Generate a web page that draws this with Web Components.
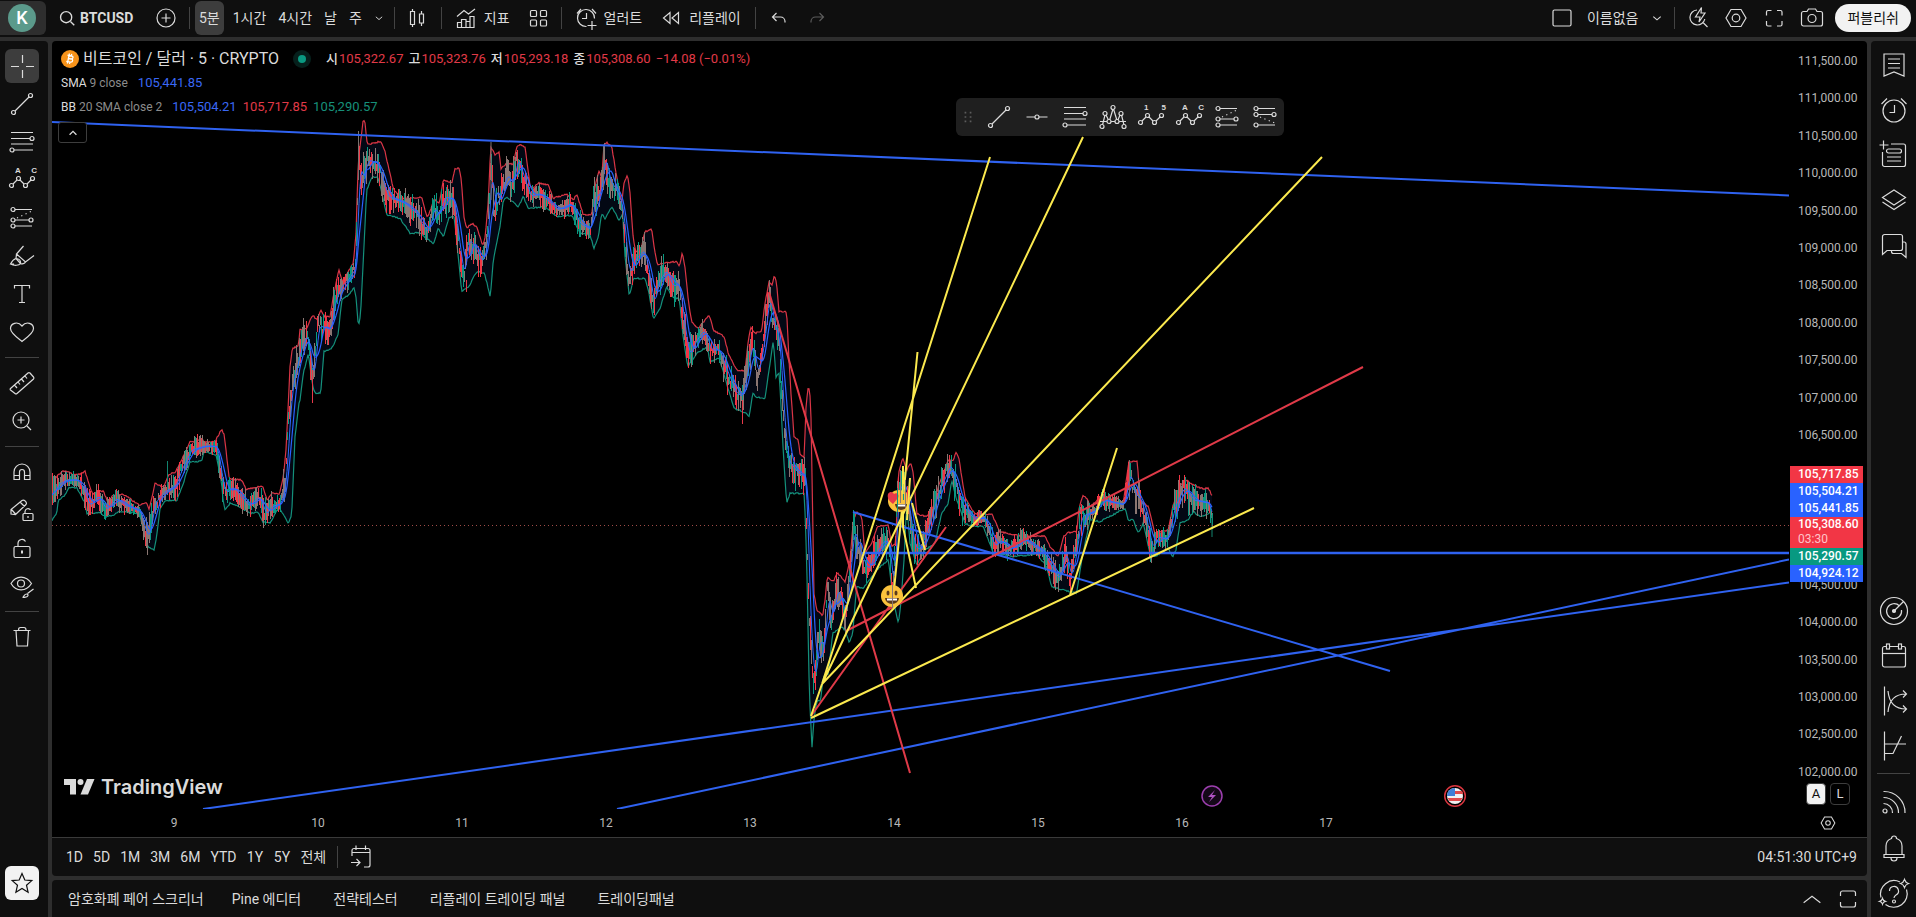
<!DOCTYPE html>
<html lang="ko">
<head>
<meta charset="utf-8">
<title>BTCUSD – TradingView</title>
<style>
  body { margin: 0; background: #2e2e2e; color: #dbdbdb; font: 14px/20px Roboto, "Noto Sans CJK KR", sans-serif; }
</style>
</head>
<body>
<tv-app></tv-app>
<script>
const ring = (x, y) => `<circle cx="${x}" cy="${y}" r="2"/>`;
const ICONS = {
  search: '<circle cx="13" cy="13" r="6.5" stroke-width="1.6"/><path d="M18 18l4.500 4.500" stroke-width="1.6"/>',
  plus: '<circle cx="14" cy="14" r="9"/><path d="M14 9.500v9M9.500 14h9"/>',
  chevron: '<path d="M10 12.500l4 3.500 4-3.500"/>',
  chevronUp: '<path d="M10 16l4-4 4 4" stroke-width="1.5"/>',
  wideUp: '<path d="M5 18l9-7 9 7"/>',
  candles: '<path d="M8.500 5v18M17.500 7v3M17.500 19v3"/><path d="M6.500 7.500h4v13h-4zM15.500 10h4v9h-4z" fill="#0f0f0f"/>',
  indicators: '<path d="M5 12.500l7-6 4.500 3.500L23 5M5.500 23.500v-5h4v5zM9.500 23.500v-8h4.500v8zM14 23.500v-6h4v6zM18 23.500V12.500h4v11z"/>',
  grid: '<rect x="6.500" y="6.500" width="6" height="6" rx="1"/><rect x="16.500" y="6.500" width="6" height="6" rx="1"/><rect x="6.500" y="16" width="6" height="6" rx="1"/><rect x="16.500" y="16" width="6" height="6" rx="1"/>',
  alertAdd: '<path d="M14.500 22.500A8.500 8.500 0 1 1 22.500 14.500M14.500 9v5.500h-4.500M5 9.500l4-4.500M24 9.500l-4-4.500M20 17v9M15.500 21.500h9"/>',
  replay: '<path d="M13 8.500v11L6.500 14zM21.500 8.500v11L15 14z"/>',
  undo: '<path d="M11.500 9l-4 4 4 4M7.500 13h8a4.500 4.500 0 0 1 4.500 4.500v1"/>',
  redo: '<path d="M16.500 9l4 4-4 4M20.500 13h-8A4.500 4.500 0 0 0 8 17.500v1"/>',
  square: '<rect x="5" y="6" width="18" height="16" rx="1.500"/>',
  quick: '<path d="M13 6a7.500 7.500 0 1 0 7.800 9M19 18.500l4.500 4.500M17.500 3.500l-6 9.500h4.500l-1 5 6-9h-4z"/>',
  hex: '<path d="M9 5.500h10l5 8.500-5 8.500H9L4 14z"/><circle cx="14" cy="14" r="3.800"/>',
  axis: '<path d="M8 3.500h12l6 10.500-6 10.500H8L2 14z" stroke-width="1.8"/><circle cx="14" cy="14" r="4" stroke-width="1.8"/>',
  full: '<path d="M6.500 11.500V8a1.500 1.500 0 0 1 1.500-1.500h3.500M17 6.500h3.500A1.500 1.500 0 0 1 22 8v3.500M22 17v3.500a1.500 1.500 0 0 1-1.500 1.500H17M11.500 22H8a1.500 1.500 0 0 1-1.500-1.500V17"/>',
  camera: '<path d="M5.500 7.500h3.500l1.500-2.500h7l1.500 2.500h3.500a2 2 0 0 1 2 2v10.500a2 2 0 0 1-2 2h-17a2 2 0 0 1-2-2V9.500a2 2 0 0 1 2-2z"/><circle cx="14" cy="14.500" r="4"/>',
  cross: '<path d="M14.500 3v8M14.500 18v8M3 14.500h8M18 14.500h8"/>',
  trend: ring(5.5, 22.5) + ring(22.5, 5.5) + '<path d="M7 21L21 7"/>',
  hline: ring(14, 14) + '<path d="M3.500 14H12M16 14h8.500"/>',
  fib: '<path d="M3 4.500h22M3 10.500h19M3 16h22M6 22h19"/>' + ring(24, 10.5) + ring(4, 22),
  head: '<path d="M1 18.500h26M3.500 22l2.500-10M7 12l3 6M10.500 17.500L14 6M14.500 6L18 17.500M18.500 18L21 12M22.500 12L25 22"/><g fill="#1f1f1f">' + ring(3, 23.5) + ring(6, 10.5) + ring(10, 18.5) + ring(14, 4.5) + ring(18, 18.5) + ring(22, 10.5) + ring(25, 23.5) + '</g>',
  zig: ring(3.5, 19.5) + ring(10.5, 12.5) + ring(17.5, 19.5) + ring(24.5, 12.5) + '<path d="M5 18l4-4M12 14l4 4M19 18l4-4"/>',
  longPos: ring(5, 5.5) + ring(5, 16) + ring(23, 16) + ring(5, 22) + '<path d="M7 5.500h17M7 16h14M7 22h17"/><path d="M9 14L24 7" stroke-dasharray="1.200 3.500"/>',
  shortPos: ring(5, 5.5) + ring(5, 11.5) + ring(23, 11.5) + ring(5, 22) + '<path d="M7 5.500h17M7 11.500h14M7 22h17"/><path d="M9 14l15 6" stroke-dasharray="1.200 3.500"/>',
  brush: '<path d="M15.500 4L8.500 12l9 8 8.500-6.500M8.500 12L8 16.500l4.500 5M8 16.500C6.500 17 4 19 2.500 22l3.500 0M8 16.500c3 0 5 2 4.500 5-1.500 2-6 2.500-10 .5M12.500 22c3 0 4.500-1 5-2"/>',
  text: '<path d="M6.500 8.500v-3h15v3M14 5.500v17M11 22.500h6"/>',
  heart: '<path d="M14 23.500C9 19.500 2.500 15 2.500 10.500c0-5 7-8 11.500-2.500 4.500-5.500 11.500-2.500 11.500 2.500 0 4.500-6.500 9-11.500 13z"/>',
  ruler: '<path d="M2.500 19.500L20 4a1.500 1.500 0 0 1 2 0l3.500 4a1.500 1.500 0 0 1 0 2L9 24.500a1.500 1.500 0 0 1-2 0L2.500 21a1 1 0 0 1 0-1.500zM6.500 16l2.500 3M10 13l2 2.500M13.500 10l2.500 3M17 7l2 2.500"/>',
  zoom: '<circle cx="13" cy="13" r="8"/><path d="M13 9.500v7M9.500 13h7M19 19l4 4"/>',
  magnet: '<path d="M6 21.500V14a8 8 0 0 1 16 0v7.500h-5.500V14a2.500 2.500 0 0 0-5 0v7.500zM6 17.500h5.500M16.500 17.500H22"/>',
  pencilLock: '<path d="M3 18v-4.500L14 4.500c2-1.500 5.500 2 4 4L7.500 18.500zM3.500 13.500l4 4.500M12 6l4.500 4.500"/><rect x="15" y="17.500" width="10" height="7" rx="1"/><path d="M17 17.500v-2a3 3 0 0 1 5.500-1.500M20 20v2"/>',
  lock: '<rect x="6" y="12.500" width="16" height="11" rx="1.500"/><path d="M10 12.500V9a4 4 0 0 1 7.500-1.500"/><path d="M14 16.500v3" stroke-width="2"/>',
  eye: '<path d="M3 11.500C8 3 18 3 23.500 11.500 18 20 8 20 3 11.500z"/><circle cx="13" cy="11.500" r="3.500"/><path d="M25.500 17l-6 4.500M14.500 25.500c1 0 1.500-3.500 4-3.500s2.500 3.500-4 3.500z"/>',
  trash: '<path d="M5.500 7.500h17M8 7.500l1 15.500h10.500l1-15.500M10.500 7c0-2 1-2.500 2-2.500h3.500c1.500 0 2 1 2 2.500"/>',
  star: '<path d="M14 4.500l2.800 6.500 7 .6-5.300 4.600 1.600 7L14 19.500l-6.100 3.700 1.600-7-5.300-4.600 7-.6z"/>',
  list: '<path d="M4 3h20v22l-10-4-10 4zM8 8h12M8 12.500h12M8 17h12"/>',
  clock: '<circle cx="14" cy="15" r="11"/><path d="M14.500 9v7.500H9.500M1.500 8L7 2.500M26.500 8L21 2.500"/>',
  addNote: '<path d="M11 3h12.500a2 2 0 0 1 2 2v18.500a2 2 0 0 1-2 2h-19a2 2 0 0 1-2-2V11M3.500-.5v9M-.5 4h9M7 16h14M7 20h14"/><rect x="6.500" y="8" width="15" height="4" rx="2"/>',
  layers: '<path d="M14 4l11.500 7.500L14 19 2.500 11.500zM2.500 16L14 23.500 25.500 16"/>',
  chat: '<path d="M2.500 23.500V5.500a2 2 0 0 1 2-2h16a2 2 0 0 1 2 2v12a2 2 0 0 1-2 2H7zM11.500 19.500v1a2 2 0 0 0 2 2h8L26 26.500V13a2 2 0 0 0-2-2h-1.500"/>',
  radar: '<circle cx="14" cy="14" r="13.500"/><path d="M19.500 9A7.500 7.500 0 1 0 21.500 13M14 14l9.500-9.500"/><circle cx="14" cy="14" r="1.500" fill="currentColor"/>',
  calendar: '<rect x="2.500" y="4.500" width="23" height="20.500" rx="2"/><path d="M2.500 11.500h23"/><rect x="6.500" y="2" width="3" height="5" fill="#0f0f0f"/><rect x="18.500" y="2" width="3" height="5" fill="#0f0f0f"/>',
  pipes: '<path d="M4.500-.5v29M8 4c1 11 6 18 18 18M8 25c1-11 6-18 18-18M23 3.500L26.500 7 23 10.500M23 18.500l3.500 3.500-3.500 3.500"/>',
  trades: '<path d="M4.500-.5v29M4.500 12h21.500M4.500 21.500h8.500L21.500 4"/>',
  rss: '<circle cx="5" cy="23" r="2"/><path d="M3.500 15.500a9 9 0 0 1 9 9.500M3.500 9.500A15 15 0 0 1 18.500 25M3.500 3.500A21 21 0 0 1 25 25"/>',
  bell: '<path d="M6 20.500V12a8 8 0 0 1 5.500-7.500 2.500 2.500 0 0 1 5 0A8 8 0 0 1 22 12v8.500M4 20.500h20v3H4zM11 24a3 3 0 0 0 6 0"/>',
  help: '<path d="M20 2A13.500 13.500 0 0 0 1 17.500M5.500 24.500A13.500 13.500 0 0 0 26.500 9.500M9.500 11a4.500 4.500 0 1 1 6.500 4c-1.500 1-2 1.500-2 3"/><circle cx="14" cy="21.500" r="1.500"/><path d="M24.500-.5c.8 2.500 1.500 3.200 4 4-2.500.8-3.200 1.500-4 4-.8-2.500-1.500-3.200-4-4 2.500-.8 3.200-1.500 4-4zM2.500 18.500c.5 1.800 1 2.300 2.800 2.800-1.800.5-2.300 1-2.800 2.800-.5-1.800-1-2.300-2.800-2.800 1.800-.5 2.300-1 2.800-2.800z"/>',
  goto: '<path d="M5 13V7.500A2 2 0 0 1 7 5.500h14a2 2 0 0 1 2 2V22a2 2 0 0 1-2 2h-4M5 9.500h18M9 2.500v4.500M18.500 2.500v4.500M4 19.500h9M9.500 16l3.500 3.500L9.500 23"/>',
  expand: '<path d="M6.500 11V8a2 2 0 0 1 2-2h11a2 2 0 0 1 2 2v3M6.500 17v3a2 2 0 0 0 2 2h11a2 2 0 0 0 2-2v-3"/>',
  dots: '<g fill="#5c5c5c" stroke="none"><path d="M10 8h2v2h-2zM16 8h2v2h-2zM10 13h2v2h-2zM16 13h2v2h-2zM10 18h2v2h-2zM16 18h2v2h-2z"/></g>',
};

class El extends HTMLElement {
  connectedCallback() {
    if (this.shadowRoot) return;
    const t = document.createElement('template');
    t.innerHTML = `<style>*{box-sizing:border-box} button,a{font:inherit;color:inherit;background:none;border:0;padding:0;text-decoration:none;cursor:pointer}${this.css()}</style>${this.html()}`;
    this.attachShadow({ mode: 'open' }).append(t.content.cloneNode(true));
    this.ready();
  }
  css() { return ''; }
  html() { return ''; }
  ready() {}
}

customElements.define('tv-icon', class extends El {
  css() { return ':host{display:block;flex:none} svg{display:block;overflow:visible;fill:none;stroke:currentColor;stroke-width:1.2}'; }
  html() {
    const s = this.getAttribute('size') || 28;
    return `<svg width="${s}" height="${s}" viewBox="0 0 28 28" aria-hidden="true">${ICONS[this.getAttribute('name')]}</svg>`;
  }
});

/* Toolbar button: an icon, a text, or both */
customElements.define('tv-button', class extends El {
  css() {
    return `:host{display:flex;flex:none;height:34px;min-width:var(--w,0)}
    button{display:flex;align-items:center;justify-content:center;gap:4px;flex:1;border-radius:6px;padding:0 var(--pad,0);white-space:nowrap}
    :host([active]) button{background:#3d3d3d} :host([dim]) button{color:#5c5c5c}
    :host([light]) button{background:#f2f2f2;color:#0f0f0f}`;
  }
  html() {
    const n = this.getAttribute('icon');
    return `<button aria-label="${this.getAttribute('label') || ''}">${n ? `<tv-icon name="${n}" size="${this.getAttribute('size') || 28}"></tv-icon>` : ''}<slot></slot></button>`;
  }
  ready() { if (!this.getAttribute('label')) this.shadowRoot.querySelector('button').removeAttribute('aria-label'); }
});

/* Wave tools carry two small letters over the zigzag */
customElements.define('tv-wave', class extends El {
  css() {
    return `:host{display:flex;flex:none;height:34px} button{position:relative;flex:1;display:flex;align-items:center;justify-content:center}
    .l{position:absolute;top:3px;left:50%;width:22px;margin-left:-7px;display:flex;justify-content:space-between;font:bold 8px/10px "Liberation Sans",sans-serif}`;
  }
  html() { return `<button aria-label="${this.getAttribute('label')}"><tv-icon name="zig"></tv-icon><span class="l"><span>${this.getAttribute('a')}</span><span>${this.getAttribute('b')}</span></span></button>`; }
});

customElements.define('tv-sep', class extends El {
  css() { return ':host{display:block;flex:none;background:#434343} :host(:not([row])){width:1px;height:22px;margin:0 4px} :host([row]){height:1px}'; }
});

customElements.define('tv-topbar', class extends El {
  css() {
    return `:host{display:flex;align-items:center;justify-content:space-between;box-sizing:border-box;height:37px;background:#0f0f0f;padding:0 5px 1px 0}
    div{display:flex;align-items:center} .g{gap:3px} .labelled{--pad:6px} .last{padding-right:4px}
    .iv{--pad:6px} .first{--pad:4px;margin:0 3px 0 1px} .ic{--w:38px}
    .me{width:46px;height:34px;background:#2e2e2e;border-radius:0 6px 6px 0;display:flex;align-items:center;justify-content:center}
    .me span{width:28px;height:28px;margin-right:2px;border-radius:50%;background:#5b9a8b;color:#fff;font:500 18px/28px Roboto,sans-serif}
    .sym{display:flex;align-items:center;gap:1px;width:101px;padding-left:9px;font-weight:700}
    .pub{height:28px;padding:0 12px;margin-left:4px;border-radius:14px;background:#f2f2f2;color:#0f0f0f}`;
  }
  html() {
    return `<div>
      <button class="me" aria-label="메뉴"><span>K</span></button>
      <button class="sym"><tv-icon name="search" size="24"></tv-icon>BTCUSD</button>
      <tv-button class="ic" icon="plus" label="심볼 추가"></tv-button><tv-sep></tv-sep>
      <tv-button class="first" active>5분</tv-button><tv-button class="iv">1시간</tv-button><tv-button class="iv">4시간</tv-button><tv-button class="iv">날</tv-button><tv-button class="iv">주</tv-button>
      <tv-button icon="chevron" size="22" label="주기"></tv-button><tv-sep></tv-sep>
      <tv-button class="ic" icon="candles" label="차트 종류"></tv-button><tv-sep></tv-sep>
      <div class="g"><tv-button class="labelled" icon="indicators">지표</tv-button><tv-button class="ic" icon="grid" label="템플릿"></tv-button></div><tv-sep></tv-sep>
      <div class="g last"><tv-button class="labelled" icon="alertAdd">얼러트</tv-button><tv-button class="labelled" icon="replay">리플레이</tv-button></div><tv-sep></tv-sep>
      <tv-button class="ic" icon="undo" label="되돌리기"></tv-button><tv-button class="ic" icon="redo" dim label="다시 하기"></tv-button>
    </div><div>
      <tv-button class="ic" icon="square" label="레이아웃"></tv-button><tv-button class="iv">이름없음</tv-button>
      <tv-button icon="chevron" size="26" label="레이아웃 메뉴"></tv-button><tv-sep></tv-sep>
      <tv-button class="ic" icon="quick" label="빠른 검색"></tv-button><tv-button class="ic" icon="hex" label="설정"></tv-button><tv-button class="ic" icon="full" label="전체화면"></tv-button><tv-button class="ic" icon="camera" label="스냅샷"></tv-button>
      <button class="pub">퍼블리쉬</button>
    </div>`;
  }
});

customElements.define('tv-tools', class extends El {
  css() {
    return `:host{display:flex;flex-direction:column;gap:4px;width:48px;box-sizing:border-box;padding:8px 9px 17px 5px;background:#0f0f0f;border-radius:0 4px 0 0}
    tv-sep{margin:4px 0} .end{margin-top:auto}`;
  }
  html() {
    const b = (i, l, x = '') => `<tv-button icon="${i}" label="${l}" ${x}></tv-button>`, s = '<tv-sep row></tv-sep>';
    return b('cross', '십자선', 'active') + b('trend', '추세선') + b('fib', '피보나치') + '<tv-wave a="A" b="C" label="패턴"></tv-wave>' + b('longPos', '예측') + b('brush', '브러쉬') + b('text', '문자') + b('heart', '아이콘') + s
      + b('ruler', '재기') + b('zoom', '확대') + s + b('magnet', '자석') + b('pencilLock', '그리기 모드 유지') + b('lock', '잠금') + b('eye', '감추기') + s + b('trash', '지우기') + b('star', '즐겨찾기', 'light class="end"');
  }
});

customElements.define('tv-widgets', class extends El {
  css() {
    return `:host{display:flex;flex-direction:column;width:45px;box-sizing:border-box;padding-top:1px;background:#0f0f0f;border-radius:4px 0 0 0}
    tv-button{height:45px;width:45px} .tall{height:46px} .push{margin-top:auto} tv-sep{margin:5px 6px}`;
  }
  html() {
    const b = (i, l, c = '') => `<tv-button icon="${i}" label="${l}" class="${c}"></tv-button>`;
    return b('list', '왓치리스트') + b('clock', '얼러트') + b('addNote', '노트') + b('layers', '오브젝트 트리') + b('chat', '채팅')
      + b('radar', '스크리너', 'push') + b('calendar', '캘린더') + b('pipes', '옵션') + b('trades', '주문') + '<tv-sep row></tv-sep>' + b('rss', '뉴스', 'tall') + b('bell', '알림', 'tall') + b('help', '도움말', 'tall');
  }
});

/* Series outlines: [origin x, origin y, points]; points are thirds of a unit from the origin */
const UPPER = [
  [40, 270, [36,632,52,618,66,604,85,604,100,615,120,612,135,604,145,635,158,674,172,664,190,664,205,698,215,680,230,672,258,676,275,690,298,706,318,696,328,718,345,640,370,652,388,612,405,608,440,540,450,516,470,514,485,504,492,516,525,514,545,478,553,495,560,560,568,628,605,630,618,658,640,654,668,648,682,692,695,670,718,672,730,620,738,540,745,400,750,290,757,235,775,228]],
  [300, 100, [0,690,20,685,38,645,50,660,63,630,75,650,90,650,100,590,117,508,127,545,160,490,168,400,175,180,190,58,195,70,202,132,220,130,242,124,255,155,280,265,300,295,365,293,382,355,403,298,418,310,430,240,455,250,465,208,477,203,484,240,492,350,500,385,515,370,530,380,548,437,556,410,565,300,572,140,585,165,597,155,603,205,620,190,640,192,650,140,662,134,675,140,690,255,700,265,715,248,745,255,760,295,800,282,820,300,830,282,850,345,875,345,885,260,897,212,905,235,912,135,920,128,935,138,950,230,965,310,972,250,983,225,990,280,1000,420,1008,455,1022,450,1035,395,1055,388,1062,440,1072,495,1090,490,1130,485,1138,500,1147,458,1156,510,1166,610,1175,665,1195,685,1228,645,1240,690,1272,710,1285,760,1310,810,1335,812,1345,720,1352,682,1365,700,1385,692,1395,610]],
  [690, 260, [237,65,246,75,253,45,260,70,267,155,290,155,297,300,303,400,312,530,325,540,330,580,343,595,347,450,355,375,362,420,367,700,372,1000,380,1050,398,1068,405,1020,412,950,430,965,442,938,465,965,480,900,490,780,500,755,515,770,525,880,545,850,562,800,595,795,605,860,617,850,625,640,638,595,650,630,662,607,670,640,680,760,690,765,710,770,730,740,745,680,775,600,790,600,798,577,806,590,815,650,825,710]],
  [780, 420, [570,260,585,282,635,282,660,335,725,348,795,348,810,380,835,410,850,350,865,338,890,335,898,260,908,228,922,235,930,260,960,235,1010,235,1030,250,1040,170,1047,125,1072,125,1080,240,1105,260,1125,340,1165,330,1178,260,1195,215,1205,190,1220,182,1260,205,1285,205,1295,225]]];
const PRICE = [
  [40, 270, [36,675,50,645,75,630,110,630,135,670,140,705,155,700,170,675,195,720,225,685,250,705,298,725,315,790,325,800,340,700,370,665,405,645,420,600,450,540,490,528,528,530,545,640,555,670,575,650,600,680,625,710,640,690,655,680,675,735,690,710,720,700,735,630,745,440,755,340]],
  [300, 100, [0,745,20,700,38,850,50,680,65,680,90,690,100,610,120,560,140,540,165,500,175,150,180,240,190,220,200,180,230,190,260,290,310,310,345,340,380,400,400,320,415,350,430,290,460,300,470,400,490,540,500,420,515,430,545,490,560,420,572,170,580,330,600,280,620,220,635,260,650,170,670,240,690,290,715,280,770,330,810,310,835,370,870,390,880,290,900,280,912,160,925,240,945,270,965,320,975,440,985,530,1000,480,1030,450,1045,530,1060,620,1070,550,1095,510,1115,560,1135,550,1150,680,1165,770,1185,720,1210,690,1230,750,1255,750,1280,820,1305,880,1325,890,1345,780,1355,720,1370,830,1390,720,1400,620]],
  [690, 260, [237,110,250,200,265,230,275,430,290,600,320,640,345,650,355,1050,370,1280,385,1130,400,1170,410,990,425,1080,440,980,465,1070,475,960,490,790,500,860,530,930,560,870,580,840,595,850,608,1010,620,700,640,660,655,750,670,860,690,870,710,810,740,700,780,610,790,660,815,740]],
  [780, 420, [580,300,610,290,640,380,660,360,690,390,725,355,790,400,810,440,835,480,855,390,870,480,885,400,900,290,945,270,960,235,980,245,1030,255,1047,150,1060,220,1080,240,1100,320,1115,390,1130,350,1160,360,1180,260,1210,200,1235,240,1285,250,1295,300]]];
const LOWER = [
  [40, 270, [36,752,50,730,55,690,72,680,85,655,110,652,135,700,140,730,180,728,197,742,220,735,240,724,298,730,315,800,322,828,342,840,350,800,360,715,375,692,410,692,430,640,450,576,485,574,492,545,528,555,545,640,550,700,556,720,570,700,605,712,630,730,655,728,668,756,692,758,715,712,735,740,745,762,755,735,765,500,778,390]],
  [300, 100, [0,900,10,820,25,760,38,860,45,878,62,880,72,755,98,742,115,700,125,600,150,580,162,562,168,590,175,680,182,640,190,480,200,270,218,228,235,235,250,300,260,345,300,355,330,400,360,398,400,432,415,385,430,410,447,352,462,350,470,420,485,575,505,562,530,515,553,518,571,590,580,480,600,380,610,300,622,292,655,320,670,290,685,325,735,320,770,350,815,345,840,400,870,405,882,445,895,410,905,340,915,355,935,320,958,362,968,340,975,470,988,590,1000,535,1035,535,1045,570,1060,655,1080,625,1100,560,1120,595,1138,595,1148,700,1163,800,1190,760,1222,740,1230,785,1258,775,1280,850,1302,925,1330,935,1348,948,1358,880,1370,892,1395,895]],
  [690, 260, [237,330,250,240,258,350,268,340,280,580,290,730,300,700,343,700,350,900,358,1300,366,1460,372,1380,380,1325,392,1320,400,1250,415,1240,428,1120,455,1100,465,1110,478,1150,488,1120,500,980,520,985,560,930,595,900,610,1020,625,1090,632,1040,642,900,650,730,660,850,680,915,705,870,735,850,755,760,775,730,785,660,800,720,825,790]],
  [780, 420, [580,320,610,318,640,400,700,410,770,402,800,440,815,500,850,510,890,520,905,420,930,300,960,305,1035,265,1045,300,1060,300,1075,340,1090,310,1110,400,1125,410,1165,385,1178,410,1188,390,1200,310,1225,298,1240,275,1260,290,1290,280]]];

customElements.define('tv-plot', class extends El {
  css() { return ':host{display:block;min-width:0;min-height:0} svg{display:block;width:100%;height:100%;fill:none}'; }
  html() {
    let seed = 7;
    const rnd = () => (seed = (seed * 16807) % 2147483647) / 2147483647;
    const expand = s => s.flatMap(([ox, oy, p]) => { const r = []; for (let i = 0; i < p.length; i += 2) r.push([ox + p[i] / 3, oy + p[i + 1] / 3]); return r; });
    const sample = pts => { const out = []; let j = 0; for (let x = 52; x <= 1212; x++) { while (j < pts.length - 2 && pts[j + 1][0] < x) j++; const [a, b] = [pts[j], pts[j + 1]]; const t = Math.max(0, Math.min(1, (x - a[0]) / (b[0] - a[0]))); out.push(a[1] + (b[1] - a[1]) * t); } return out; };
    const u = sample(expand(UPPER)), p = sample(expand(PRICE)), l = sample(expand(LOWER));
    const rough = (a, k) => a.map(v => v + (rnd() - 0.5) * k);
    const path = a => 'M' + a.map((v, i) => `${52 + i} ${v.toFixed(1)}`).join('L');
    const avg = n => p.map((_, i) => { let s = 0, c = 0; for (let k = Math.max(0, i - n); k <= i; k++) { s += p[k]; c++; } return s / c; });
    const c = { r: '', g: '', n: '' };
    p.forEach((v, i) => {
      const band = Math.max(6, l[i] - u[i]);
      const mid = v + (rnd() - 0.5) * Math.min(14, band * 0.3), h = 3 + rnd() * Math.min(14, band * 0.38);
      const q = rnd(), k = q < 0.3 ? 'r' : q < 0.58 ? 'g' : 'n';
      c[k] += `M${52.5 + i} ${(mid - h).toFixed(0)}V${(mid + h).toFixed(0)}`;
    });
    const U = rough(u, 1.5), L = rough(l, 1.5);
    const line = (col, w, d) => `<path d="${d}" stroke="${col}" stroke-width="${w}"/>`;
    const Y = '#fbe94e', B = '#2f62f0', R = '#e03a48';
    return `<svg viewBox="52 41 1737 768" preserveAspectRatio="none" role="img" aria-label="BTCUSD 차트">
      <path d="${path(u)}L${l.map((v, i) => `${52 + i} ${v.toFixed(1)}`).reverse().join('L')}Z" fill="#2962ff" fill-opacity=".08"/>
      ${line('#d93545', 1.2, path(U))}${line('#14907a', 1.2, path(L))}
      ${line('#f23645', 1, c.r)}${line('#0a9981', 1, c.g)}${line('#8a7672', 1, c.n)}
      ${line('#2962ff', 1.2, path(avg(9)))}${line('#2f6bff', 1, path(avg(4)))}
      ${line('#7a7370', 1, 'M358.5 131V180M491 142V200M603.5 145V190M1129.500 460V500')}${line('#e8394a', 1, 'M312.500 370V403M742.500 400V424M466.500 280V292')}${line('#12846f', 1, 'M1212 515V537M167.500 461V490')}
      <path d="M52 525.500H1789" stroke="#a04c48" stroke-dasharray="1 3"/>
      ${line(B, 2, 'M52 122L1789 195.500M203 809L1789 582.500M617 809L1789 559.500M853 512L1390 671')}${line(B, 2.4, 'M862 553H1789')}
      ${line(R, 2, 'M769 292L910 773M811 716L946 527M846 631L1363 367')}
      ${line(Y, 2, 'M811 718L1254 508M811 716L822 684M822 684L990 157M822 684L1083 137M822 684L1322 157M894 590L917.500 352M903 466V527L916 588M910 478L907 520M912 503L925 550M1070 595L1117 448')}
      <g><circle cx="899" cy="501" r="11" fill="#fbc23c"/><path d="M888 494c2-3 5-2 6 0 2-2 6 0 4 4l-5 6c-4-3-6-6-5-10z" fill="#e8394a"/><path d="M895 504h12a6 6 0 0 1-12 0z" fill="#5a3a1c"/><path d="M897 504.500h9v2h-9z" fill="#fff"/></g>
      <g><circle cx="892" cy="596" r="11" fill="#fbc23c"/><ellipse cx="888" cy="593" rx="1.500" ry="2.500" fill="#5a3a1c"/><ellipse cx="896" cy="593" rx="1.500" ry="2.500" fill="#5a3a1c"/><path d="M885 598h14a7 6 0 0 1-14 0z" fill="#5a3a1c"/><path d="M887 598.500h10v2h-10z" fill="#fff"/></g>
      ${line('#8a7672', 1, 'M900.500 470V503M905.500 480V508M892.500 585V608')}${line('#0a9981', 1, 'M897.500 488V512M903.500 484V500')}${line('#f23645', 1, 'M907.500 486V508')}${line(Y, 1.5, 'M903 466V494M909 490L907 514')}
      <circle cx="1212" cy="796" r="10" stroke="#9c3fae" stroke-width="1.500" fill="#140818"/><path d="M1215 790l-7 7h4l-3 5 7-7h-4z" fill="#b052c4"/>
      <circle cx="1455" cy="796" r="10.300" stroke="#d9363f" stroke-width="1.500"/><circle cx="1455" cy="796" r="8" fill="#f0f0f0"/><path d="M1455 791h7c1 1 1 2 1 3h-8zM1447.500 798h15l-2 3h-11z" fill="#e04a4a"/><path d="M1455 788v8h-8a8 8 0 0 1 8-8z" fill="#3f7fd6"/>
    </svg>`;
  }
});

customElements.define('tv-legend', class extends El {
  css() {
    return `:host{display:block;font-size:13px;line-height:18px} div{display:flex;align-items:center;white-space:nowrap}
    .t{height:24px} h1{margin:0 14px 0 4px;font-size:16px;font-weight:400;line-height:24px} svg{display:block;flex:none}
    .o{margin-left:15px;gap:5px} .o span{color:#e03a48} b{font-weight:500;color:#dbdbdb;margin-right:1px}
    .i{height:24px;gap:6px} .i em{margin-right:4px;font-style:normal;font-size:12px;color:#8c8c8c} .i .n{color:#dbdbdb} .b{color:#3a68f5}.r{color:#e03a48}.g{color:#17907a}`;
  }
  html() {
    const o = (k, v) => `<span><b>${k}</b>${v}</span>`;
    return `<div class="t"><svg width="18" height="18" viewBox="0 0 18 18"><circle cx="9" cy="9" r="9" fill="#f7931a"/><path d="M6.500 5.200l4 .8c2.400.5 1.800 2.800-.4 2.800 2.300.2 2 3.600-.6 3.300l-4.200-.8M8 5.500L6.800 11.500M7.200 8.500l3 .5M8.500 3.500l-.4 2M10.700 4l-.4 2M6.700 11.500l-.4 2M8.900 12l-.4 2" fill="none" stroke="#fff" stroke-width="1.300"/></svg>
      <h1>비트코인 / 달러 · 5 · CRYPTO</h1>
      <svg width="18" height="18"><circle cx="9" cy="9" r="9" fill="#06201c"/><circle cx="9" cy="9" r="4" fill="#0a9981"/></svg>
      <div class="o">${o('시', '105,322.67')}${o('고', '105,323.76')}${o('저', '105,293.18')}${o('종', '105,308.60')}<span>−14.08 (−0.01%)</span></div></div>
      <div class="i"><em><span class="n">SMA</span> 9 close</em><span class="b">105,441.85</span></div>
      <div class="i"><em><span class="n">BB</span> 20 SMA close 2</em><span class="b">105,504.21</span><span class="r">105,717.85</span><span class="g">105,290.57</span></div>`;
  }
});

customElements.define('tv-favorites', class extends El {
  css() { return ':host{display:flex;align-items:center;height:38px;background:#1f1f1f;border-radius:6px} tv-button,tv-wave{width:38px} .d{width:24px;justify-content:center}'; }
  html() {
    const b = (i, l) => `<tv-button icon="${i}" label="${l}"></tv-button>`;
    return '<tv-button class="d" icon="dots" size="24" label="이동"></tv-button>' + b('trend', '추세선') + b('hline', '가로줄') + b('fib', '피보나치') + b('head', '헤드앤숄더') + '<tv-wave a="1" b="5" label="엘리엇 충격파"></tv-wave><tv-wave a="A" b="C" label="엘리엇 조정파"></tv-wave>' + b('longPos', '매수 포지션') + b('shortPos', '매도 포지션');
  }
});

customElements.define('tv-prices', class extends El {
  css() {
    return `:host{position:relative;display:flex;flex-direction:column;width:78px;font-size:12px;color:#b8b8b8}
    .l{flex:1;display:flex;flex-direction:column;justify-content:space-between;padding:12px 0 0 9px;min-height:0} .l span{height:16px;line-height:16px}
    .m{display:flex;gap:4px;padding:3px 0 4px 17px} .m button{width:20px;height:22px;border-radius:4px;border:1px solid #3d3d3d;font-size:13px;line-height:20px;color:#dbdbdb} .m button.on{background:#f2f2f2;color:#0f0f0f}
    .tags{position:absolute;left:1px;top:425px;width:73px;color:#fff;font-weight:500} .tags span{display:block;height:17px;line-height:17px;padding-left:8px}
    .tags .r{background:#f23645} .tags .b{background:#2962ff} .tags .g{background:#089981} .tags .two{height:31px;line-height:15px} small{display:block;font-size:12px;font-weight:400;color:#ffc4c9}`;
  }
  html() {
    let s = '';
    for (let v = 111500; v >= 102000; v -= 500) s += `<span>${v <= 106000 && v >= 105000 ? '' : v.toLocaleString('en-US') + '.00'}</span>`;
    return `<div class="l">${s}</div><div class="m"><button class="on">A</button><button>L</button></div>
      <div class="tags"><span class="r">105,717.85</span><span class="b">105,504.21</span><span class="b">105,441.85</span><span class="r two">105,308.60<small>03:30</small></span><span class="g">105,290.57</span><span class="b">104,924.12</span></div>`;
  }
});

customElements.define('tv-chart', class extends El {
  css() {
    return `:host{position:relative;display:flex;flex-direction:column;background:#000;border-radius:4px 4px 0 0;overflow:hidden;min-height:0}
    .row{flex:1;display:flex;min-height:0} tv-plot{flex:1}
    .time{display:grid;height:28px;grid-template-columns:50fr repeat(9,144fr) 391fr 78px;align-items:center;justify-items:center;font-size:12px;color:#b8b8b8}
    .time tv-icon{color:#dbdbdb}
    tv-legend{position:absolute;left:9px;top:6px} .fold{position:absolute;left:6px;top:81px;width:29px;height:21px;border:1px solid #3d3d3d;border-radius:3px;background:#000;display:flex;align-items:center;justify-content:center}
    tv-favorites{position:absolute;left:904px;top:57px} .logo{position:absolute;left:12px;bottom:36px;display:flex;align-items:center;gap:6px;color:#dbdbdb;font:600 20px/28px Inter,sans-serif}
    .logo svg{fill:currentColor}`;
  }
  html() {
    return `<div class="row"><tv-plot></tv-plot><tv-prices></tv-prices></div>
      <div class="time"><span></span>${[9, 10, 11, 12, 13, 14, 15, 16, 17].map(d => `<span>${d}</span>`).join('')}<span></span><tv-icon name="axis" size="16"></tv-icon></div>
      <tv-legend></tv-legend><button class="fold" aria-label="접기"><tv-icon name="chevronUp" size="24"></tv-icon></button>
      <tv-favorites></tv-favorites>
      <a class="logo" href="#"><svg width="31" height="16" viewBox="0 0 31 16"><path d="M0 0h12v15.500H6V6H0z"/><circle cx="16.500" cy="3" r="3"/><path d="M23 0h7.500l-6.500 15.500h-7.500z"/></svg>TradingView</a>`;
  }
});

customElements.define('tv-ranges', class extends El {
  css() {
    return `:host{display:flex;align-items:center;box-sizing:border-box;height:39px;padding:0 10px 0 9px;background:#0f0f0f;border-top:1px solid #3a3a3a;border-radius:0 0 4px 4px;font-size:14px}
    button{height:28px} .r{padding:0 5px;min-width:27px} tv-sep{margin:0 9px 0 6px} .clock{margin-left:auto}`;
  }
  html() { return ['1D', '5D', '1M', '3M', '6M', 'YTD', '1Y', '5Y', '전체'].map(t => `<button class="r">${t}</button>`).join('') + '<tv-sep></tv-sep><tv-button icon="goto" label="날짜로 가기"></tv-button><button class="clock">04:51:30 UTC+9</button>'; }
});

customElements.define('tv-tabs', class extends El {
  css() { return ':host{display:flex;align-items:center;height:37px;padding:0 1px 0 0;background:#0f0f0f;border-radius:4px 4px 0 0} .t{padding:0 16px;height:34px} .t:first-of-type{padding-right:12px} .e{margin-left:auto} tv-button{--w:36px}'; }
  html() { return ['암호화폐 페어 스크리너', 'Pine 에디터', '전략테스터', '리플레이 트레이딩 패널', '트레이딩패널'].map(t => `<button class="t">${t}</button>`).join('') + '<tv-button class="e" icon="wideUp" size="26" label="패널 열기"></tv-button><tv-button icon="expand" label="패널 최대화"></tv-button>'; }
});

customElements.define('tv-app', class extends El {
  css() {
    return `:host{display:grid;height:100vh;grid-template:37px minmax(0,1fr)/48px minmax(0,1fr) 45px;gap:4px;background:#2e2e2e}
    tv-topbar{grid-column:1/-1} main{display:flex;flex-direction:column;min-height:0} tv-chart{flex:1} tv-tabs{margin-top:4px}`;
  }
  html() { return '<tv-topbar></tv-topbar><tv-tools></tv-tools><main><tv-chart></tv-chart><tv-ranges></tv-ranges><tv-tabs></tv-tabs></main><tv-widgets></tv-widgets>'; }
});
</script>
</body>
</html>
